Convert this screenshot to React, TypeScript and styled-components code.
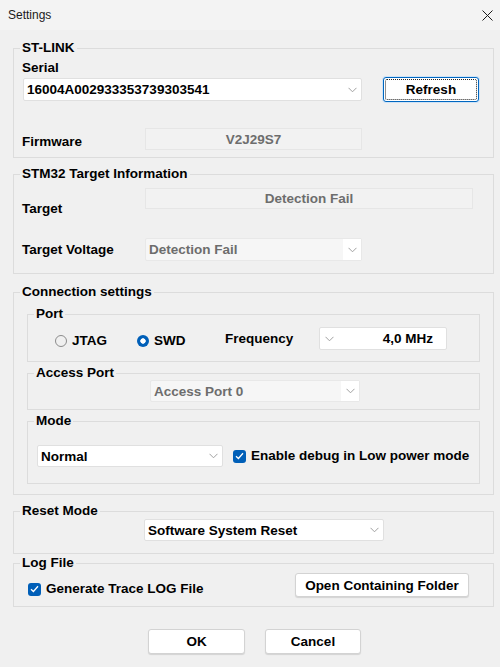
import styled, { createGlobalStyle, css } from "styled-components";

const GlobalStyle = createGlobalStyle`
  html, body {
    margin: 0;
    padding: 0;
    background: #f0f0f0;
  }
  body {
    font-family: "Liberation Sans", Arial, sans-serif;
  }
`;

const Window = styled.div`
  width: 500px;
  height: 667px;
  background: #f0f0f0;
  color: #000;
  font-size: 13.5px;
  font-weight: bold;
  display: flex;
  flex-direction: column;
`;

const TitleBar = styled.div`
  height: 30px;
  flex: none;
  display: flex;
  align-items: center;
  justify-content: space-between;
  padding: 0 3px 0 8px;
  box-sizing: border-box;
  background: #f3f3f3;
`;

const Title = styled.span`
  font-size: 12px;
  font-weight: normal;
  color: #1a1a1a;
`;

const CloseBtn = styled.span`
  width: 20px;
  height: 20px;
  display: flex;
  align-items: center;
  justify-content: center;
`;

const Content = styled.div`
  display: flex;
  flex-direction: column;
  padding: 0 6px 0 13px;
`;

const Group = styled.fieldset<{ $mt: number; $pb: number; $inset?: boolean }>`
  margin: ${(p) => p.$mt}px ${(p) => (p.$inset ? 13 : 0)}px 0;
  padding: 0 0 ${(p) => p.$pb}px;
  border: 1px solid #dcdcdc;
  min-inline-size: 0;
`;

const Legend = styled.legend`
  margin-left: 6px;
  padding: 0 2px;
  line-height: 14px;
`;

const Row = styled.div<{ $mt: number; $h: number; $pl: number; $pr?: number }>`
  display: flex;
  align-items: center;
  margin-top: ${(p) => p.$mt}px;
  height: ${(p) => p.$h}px;
  padding-left: ${(p) => p.$pl}px;
  padding-right: ${(p) => p.$pr ?? 0}px;
`;

const Label = styled.span<{ $w?: number; $self?: string }>`
  line-height: 16px;
  white-space: nowrap;
  ${(p) => p.$w && `width: ${p.$w}px; flex: none;`}
  ${(p) => p.$self && `align-self: ${p.$self};`}
`;

const Combo = styled.div<{
  $w: number;
  $h: number;
  $ml?: number;
  $disabled?: boolean;
  $chevLeft?: boolean;
}>`
  width: ${(p) => p.$w}px;
  height: ${(p) => p.$h}px;
  margin-left: ${(p) => p.$ml ?? 0}px;
  flex: none;
  box-sizing: border-box;
  border: 1px solid ${(p) => (p.$disabled ? "#e8e8e8" : "#e0e0e0")};
  border-radius: 2px;
  background: ${(p) => (p.$disabled ? "#f6f6f6" : "#fff")};
  display: flex;
  flex-direction: ${(p) => (p.$chevLeft ? "row-reverse" : "row")};
  align-items: center;
`;

const ComboText = styled.span<{ $right?: boolean; $disabled?: boolean }>`
  flex: 1;
  white-space: nowrap;
  overflow: hidden;
  padding: ${(p) => (p.$right ? "0 13px 0 0" : "0 0 0 3px")};
  text-align: ${(p) => (p.$right ? "right" : "left")};
  color: ${(p) => (p.$disabled ? "#6d6d6d" : "#000")};
`;

const ChevronBox = styled.span<{ $disabled?: boolean }>`
  width: 18px;
  align-self: stretch;
  flex: none;
  display: flex;
  align-items: center;
  justify-content: center;
  background: ${(p) => (p.$disabled ? "#fff" : "transparent")};
`;

const ReadOnly = styled.div<{ $w: number; $h: number; $self?: string }>`
  width: ${(p) => p.$w}px;
  height: ${(p) => p.$h}px;
  flex: none;
  box-sizing: border-box;
  border: 1px solid #e6e6e6;
  background: #f2f2f2;
  color: #6d6d6d;
  display: flex;
  align-items: center;
  justify-content: center;
  ${(p) => p.$self && `align-self: ${p.$self};`}
`;

const Button = styled.button<{ $w: number; $h: number; $ml?: number; $focus?: boolean; $auto?: boolean }>`
  width: ${(p) => p.$w}px;
  height: ${(p) => p.$h}px;
  margin-left: ${(p) => (p.$auto ? "auto" : `${p.$ml ?? 0}px`)};
  flex: none;
  position: relative;
  box-sizing: border-box;
  padding: 0;
  font: inherit;
  color: #000;
  background: #fff;
  border: 1px solid #d3d3d3;
  border-radius: 3px;
  box-shadow: 0 1px 1px rgba(0, 0, 0, 0.12);
  ${(p) =>
    p.$focus &&
    css`
      border-color: #0067c0;
      box-shadow: 0 0 0 1px #cfe3f7;
      &::after {
        content: "";
        position: absolute;
        inset: 1px;
        border: 1px dotted #222;
        border-radius: 2px;
      }
    `}
`;

const Option = styled.label<{ $w: number }>`
  width: ${(p) => p.$w}px;
  flex: none;
  display: flex;
  align-items: center;
  gap: 5px;
  line-height: 16px;
  padding-top: 4px;
`;

const Radio = styled.span<{ $checked?: boolean }>`
  width: 12px;
  height: 12px;
  flex: none;
  box-sizing: border-box;
  border-radius: 50%;
  ${(p) =>
    p.$checked
      ? css`
          background: radial-gradient(circle, #fff 0 2.4px, #005fb8 3px);
        `
      : css`
          border: 1px solid #8c8c8c;
        `}
`;

const CheckLine = styled.div<{ $ml?: number; $dy?: number }>`
  display: flex;
  align-items: center;
  margin-left: ${(p) => p.$ml ?? 0}px;
  padding-top: ${(p) => p.$dy ?? 0}px;
`;

const CheckBox = styled.span`
  width: 13px;
  height: 13px;
  flex: none;
  border-radius: 3px;
  background: #005fb8;
  display: flex;
  align-items: center;
  justify-content: center;
`;

const CheckText = styled.span<{ $ml: number }>`
  margin-left: ${(p) => p.$ml}px;
  white-space: nowrap;
  line-height: 16px;
`;

const Footer = styled.div`
  display: flex;
  justify-content: center;
  gap: 20px;
  padding-left: 9px;
  margin-top: 22px;
`;

const Chevron = () => (
  <svg width="9" height="6" viewBox="0 0 9 6">
    <polyline points="0.5,0.8 4.5,4.8 8.5,0.8" fill="none" stroke="#a0a0a0" strokeWidth="1" />
  </svg>
);

const Check = () => (
  <svg width="9" height="8" viewBox="0 0 9 8">
    <polyline points="1,4.2 3.4,6.5 8,1.3" fill="none" stroke="#fff" strokeWidth="1.3" />
  </svg>
);

type SelectProps = {
  w: number;
  h: number;
  ml?: number;
  text: string;
  disabled?: boolean;
  chevLeft?: boolean;
};

const Select = ({ w, h, ml, text, disabled, chevLeft }: SelectProps) => (
  <Combo $w={w} $h={h} $ml={ml} $disabled={disabled} $chevLeft={chevLeft}>
    <ComboText $disabled={disabled} $right={chevLeft}>
      {text}
    </ComboText>
    <ChevronBox $disabled={disabled}>
      <Chevron />
    </ChevronBox>
  </Combo>
);

export default function App() {
  return (
    <>
      <GlobalStyle />
      <Window>
        <TitleBar>
          <Title>Settings</Title>
          <CloseBtn>
            <svg width="11" height="11" viewBox="0 0 11 11">
              <path d="M0.5 0.5 L10.5 10.5 M10.5 0.5 L0.5 10.5" stroke="#1a1a1a" strokeWidth="1" />
            </svg>
          </CloseBtn>
        </TitleBar>

        <Content>
          {/* ST-LINK */}
          <Group $mt={11} $pb={7}>
            <Legend>ST-LINK</Legend>
            <Row $mt={5} $h={16} $pl={8}>
              <Label>Serial</Label>
            </Row>
            <Row $mt={1} $h={25} $pl={9}>
              <Select w={339} h={23} text="16004A002933353739303541" />
              <Button $w={96} $h={25} $ml={21} $focus>
                Refresh
              </Button>
            </Row>
            <Row $mt={26} $h={22} $pl={8}>
              <Label $w={123} $self="flex-end">
                Firmware
              </Label>
              <ReadOnly $w={217} $h={22}>
                V2J29S7
              </ReadOnly>
            </Row>
          </Group>

          {/* STM32 Target Information */}
          <Group $mt={9} $pb={12}>
            <Legend>STM32 Target Information</Legend>
            <Row $mt={7} $h={29} $pl={8}>
              <Label $w={123} $self="flex-end">
                Target
              </Label>
              <ReadOnly $w={328} $h={21} $self="flex-start">
                Detection Fail
              </ReadOnly>
            </Row>
            <Row $mt={21} $h={23} $pl={8}>
              <Label $w={123}>Target Voltage</Label>
              <Select w={217} h={23} text="Detection Fail" disabled />
            </Row>
          </Group>

          {/* Connection settings */}
          <Group $mt={11} $pb={10}>
            <Legend>Connection settings</Legend>

            <Group $mt={8} $pb={11} $inset>
              <Legend>Port</Legend>
              <Row $mt={6} $h={23} $pl={27}>
                <Option $w={82}>
                  <Radio />
                  JTAG
                </Option>
                <Option $w={88}>
                  <Radio $checked />
                  SWD
                </Option>
                <Label $w={94}>Frequency</Label>
                <Select w={128} h={23} text="4,0 MHz" chevLeft />
              </Row>
            </Group>

            <Group $mt={4} $pb={7} $inset>
              <Legend>Access Port</Legend>
              <Row $mt={0} $h={22} $pl={122}>
                <Select w={210} h={22} text="Access Port 0" disabled />
              </Row>
            </Group>

            <Group $mt={4} $pb={16} $inset>
              <Legend>Mode</Legend>
              <Row $mt={17} $h={22} $pl={9}>
                <Select w={186} h={22} text="Normal" />
                <CheckLine $ml={10}>
                  <CheckBox>
                    <Check />
                  </CheckBox>
                  <CheckText $ml={5}>Enable debug in Low power mode</CheckText>
                </CheckLine>
              </Row>
            </Group>
          </Group>

          {/* Reset Mode */}
          <Group $mt={9} $pb={12}>
            <Legend>Reset Mode</Legend>
            <Row $mt={1} $h={22} $pl={130}>
              <Select w={240} h={22} text="Software System Reset" />
            </Row>
          </Group>

          {/* Log File */}
          <Group $mt={2} $pb={9}>
            <Legend>Log File</Legend>
            <Row $mt={3} $h={24} $pl={14} $pr={24}>
              <CheckLine $dy={8}>
                <CheckBox>
                  <Check />
                </CheckBox>
                <CheckText $ml={5}>Generate Trace LOG File</CheckText>
              </CheckLine>
              <Button $w={174} $h={24} $auto>
                Open Containing Folder
              </Button>
            </Row>
          </Group>
        </Content>

        <Footer>
          <Button $w={97} $h={25}>
            OK
          </Button>
          <Button $w={96} $h={25}>
            Cancel
          </Button>
        </Footer>
      </Window>
    </>
  );
}
